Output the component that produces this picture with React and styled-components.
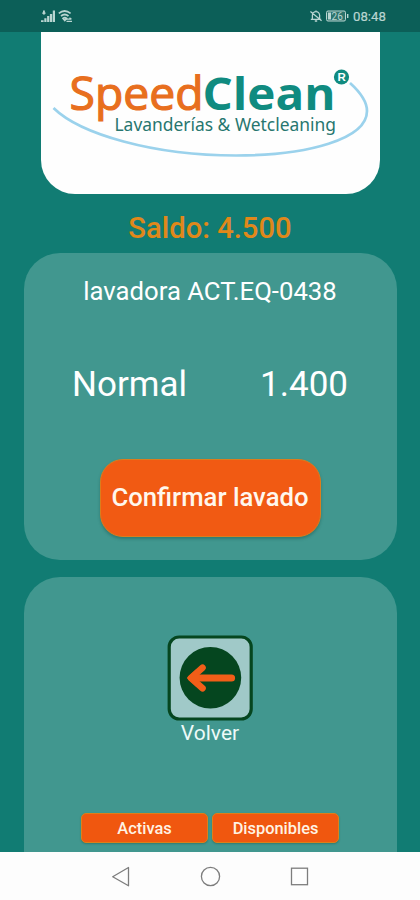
import React from 'react';
import styled, { createGlobalStyle } from 'styled-components';

const GlobalStyle = createGlobalStyle`
  *, *::before, *::after { box-sizing: border-box; }
  html, body { margin: 0; padding: 0; background: #117c73; }
  button { font: inherit; margin: 0; padding: 0; cursor: pointer; }
`;

const Screen = styled.div`
  width: 420px;
  height: 900px;
  display: flex;
  flex-direction: column;
  overflow: hidden;
  background: #117c73;
  color: #fff;
  font-family: Roboto, sans-serif;
`;

const StatusBar = styled.header`
  flex: none;
  height: 32px;
  padding: 0 33px 0 41px;
  display: flex;
  align-items: center;
  justify-content: space-between;
  background: #0c5f58;
  color: #b9d5d1;
`;

const StatusGroup = styled.div`
  display: flex;
  align-items: center;
  gap: ${({ $gap }) => $gap}px;
`;

const Clock = styled.time`
  font-size: 13.2px;
  line-height: 16px;
  width: 34px;
  padding-top: 1px;
  white-space: nowrap;
  -webkit-text-stroke: 0.2px currentColor;
`;

const Content = styled.main`
  flex: 1;
  min-height: 0;
  display: flex;
  flex-direction: column;
  align-items: center;
`;

const LogoPanel = styled.div`
  flex: none;
  width: 339px;
  height: 162px;
  background: #fefefe;
  border-radius: 0 0 34px 34px;

  svg { display: block; }
`;

const Balance = styled.h1`
  flex: none;
  margin: 0;
  height: 59px;
  padding-top: 17px;
  font-size: 29.2px;
  line-height: 34px;
  font-weight: 500;
  color: #e0881a;
  white-space: nowrap;
`;

const Card = styled.section`
  flex: none;
  width: 373px;
  height: ${({ $height }) => $height}px;
  display: flex;
  flex-direction: column;
  align-items: center;
  background: #41978f;
  border-radius: ${({ $open }) => ($open ? '36px 36px 0 0' : '36px')};
  margin-bottom: ${({ $open }) => ($open ? 0 : 17)}px;
`;

const Machine = styled.h2`
  margin: 23px 0 0;
  font-size: 25.7px;
  line-height: 30px;
  font-weight: 400;
  white-space: nowrap;
`;

const PriceRow = styled.div`
  width: 276px;
  margin-top: 56px;
  display: flex;
  justify-content: space-between;
  font-size: 35px;
  line-height: 46px;
`;

const ConfirmButton = styled.button`
  width: 221px;
  height: 78px;
  margin-top: 51px;
  padding-bottom: 2px;
  border: 1.5px solid #dc7d1c;
  border-radius: 23px;
  background: #f15a13;
  color: #fff7ed;
  box-shadow: 0 2px 3px rgba(20, 70, 60, 0.35);

  && {
    font-size: 25.7px;
    font-weight: 500;
    white-space: nowrap;
  }
`;

const BackButton = styled.button`
  margin-top: 58px;
  display: flex;
  flex-direction: column;
  align-items: center;
  border: 0;
  background: none;
  color: #edfaf8;

  && {
    font-size: 21px;
    line-height: 24px;
  }
`;

const Tabs = styled.nav`
  margin-top: auto;
  margin-bottom: 9px;
  display: flex;
  gap: 4px;
`;

const Tab = styled.button`
  width: 127px;
  height: 30px;
  border: 1.5px solid #dd8019;
  border-radius: 5px;
  background: #f0570f;
  color: #fff3e4;
  box-shadow: 0 1px 2px rgba(20, 70, 60, 0.35);

  && {
    font-size: 16.4px;
    font-weight: 500;
  }
`;

const SystemNav = styled.footer`
  flex: none;
  height: 48px;
  background: #fdfdfd;
  display: flex;
  justify-content: center;
  align-items: center;
  gap: 67px;
`;

const Signal = () => (
  <svg width="14" height="14" viewBox="0 0 14 14" fill="currentColor">
    <path d="M0 11.3h2.6V13H0zM3.3 9.3h2.2V13H3.3zM6.1 7h2.2v6H6.1zM8.9 5h2.3v8H8.9zM11.8 1.5H14V13h-2.2z" />
    <path d="M2 1.6h1.9v3.8H2zM1.2 3.6h3.4v1.2H1.2z" />
  </svg>
);

const Wifi = () => (
  <svg width="15" height="14" viewBox="0 0 15 14" fill="none" stroke="currentColor" strokeWidth="1.7">
    <path d="M.8 4.4Q6.5-.4 12.6 4.4M3 7Q6.7 4 10.5 7M5 9.3Q6.8 7.8 8.6 9.3L6.8 11.4z" />
    <path d="M8 10.2h5M11.5 8.8l2 1.4M14 12.3H8.5" strokeWidth="1.2" />
  </svg>
);

const BellOff = () => (
  <svg width="12" height="14" viewBox="0 0 12 14" fill="none" stroke="currentColor" strokeWidth="1.3">
    <path d="M2.4 10V6.2a3.6 3.6 0 0 1 7.2 0V10M.8 10.3h10.4M4.8 12h2.4M6 1.4v1.2M.4 2.4l11.2 9.4" />
  </svg>
);

const Battery = () => (
  <svg width="23" height="12" viewBox="0 0 23 12">
    <rect x=".5" y="1" width="19" height="10" rx="1.5" fill="#2d736c" stroke="currentColor" strokeWidth="1" />
    <path d="M2 2.5h3v7H2z" fill="currentColor" />
    <path d="M21 4h1.4v4H21z" fill="currentColor" />
    <text x="5.6" y="9.6" fontSize="10" fontFamily="Roboto, sans-serif" fill="currentColor">26</text>
  </svg>
);

const Logo = () => (
  <svg width="339" height="162" viewBox="41 32 339 162" role="img" aria-label="SpeedClean">
    <path
      d="M53.5 108 C80 134 153 155.5 236 155.5 C308 155.5 367 139 367 111 C367 102 360 92 350 83"
      fill="none" stroke="#9bd2ec" strokeWidth="2.7"
    />
    <g fontFamily="'Open Sans', 'Noto Sans', sans-serif">
      <text x="69.5" y="109.5" fontSize="45" textLength="134" lengthAdjust="spacingAndGlyphs" fill="#e86f1e" stroke="#e86f1e" strokeWidth="1.2">Speed</text>
      <text x="202.5" y="109.5" fontSize="45" fontWeight="700" textLength="133" lengthAdjust="spacingAndGlyphs" fill="#108b80">Clean</text>
    </g>
    <text x="114.5" y="130.5" fontFamily="'Noto Sans', sans-serif" fontSize="17.6" textLength="221.5" lengthAdjust="spacingAndGlyphs" fill="#27766f">Lavanderías &amp; Wetcleaning</text>
    <circle cx="341.5" cy="77" r="7.6" fill="#108b80" />
    <text x="341.7" y="81.2" textAnchor="middle" fontFamily="'Liberation Sans', sans-serif" fontWeight="700" fontSize="11.5" fill="#fff">R</text>
  </svg>
);

const BackIcon = () => (
  <svg width="86" height="86" viewBox="0 0 86 86">
    <rect x="2.2" y="2" width="82" height="82" rx="10" fill="#a0c9c8" stroke="#05461f" strokeWidth="3.2" />
    <circle cx="43.4" cy="42.8" r="30.8" fill="#05461f" />
    <path d="M64.5 43H28" fill="none" stroke="#f25e18" strokeWidth="7.2" strokeLinecap="round" />
    <path d="M35.5 32.8 24 43 35.5 53.2" fill="none" stroke="#f25e18" strokeWidth="6.6" strokeLinecap="round" strokeLinejoin="round" />
    <path d="M19.8 43 29 34.5 33 43 29 51.5z" fill="#f25e18" />
  </svg>
);

const NavBack = () => (
  <svg width="22" height="22" viewBox="0 0 22 22" fill="none" stroke="#7d7d7d" strokeWidth="1.3" strokeLinejoin="round">
    <path d="M18.5 2.5v18.3L2.7 11.8z" />
  </svg>
);

const NavHome = () => (
  <svg width="22" height="22" viewBox="0 0 22 22" fill="none" stroke="#7d7d7d" strokeWidth="1.3">
    <circle cx="11.5" cy="11.5" r="9.1" />
  </svg>
);

const NavRecent = () => (
  <svg width="22" height="22" viewBox="0 0 22 22" fill="none" stroke="#7d7d7d" strokeWidth="1.3">
    <rect x="3.5" y="3.2" width="16" height="16.5" />
  </svg>
);

export default function App() {
  return (
    <>
      <GlobalStyle />
      <Screen>
        <StatusBar>
          <StatusGroup $gap={3}>
            <Signal />
            <Wifi />
          </StatusGroup>
          <StatusGroup $gap={4}>
            <BellOff />
            <Battery />
            <Clock>08:48</Clock>
          </StatusGroup>
        </StatusBar>
        <Content>
          <LogoPanel>
            <Logo />
          </LogoPanel>
          <Balance>Saldo: 4.500</Balance>
          <Card $height={307}>
            <Machine>lavadora ACT.EQ-0438</Machine>
            <PriceRow>
              <span>Normal</span>
              <span>1.400</span>
            </PriceRow>
            <ConfirmButton>Confirmar lavado</ConfirmButton>
          </Card>
          <Card $height={275} $open>
            <BackButton>
              <BackIcon />
              <span>Volver</span>
            </BackButton>
            <Tabs>
              <Tab>Activas</Tab>
              <Tab>Disponibles</Tab>
            </Tabs>
          </Card>
        </Content>
        <SystemNav>
          <NavBack />
          <NavHome />
          <NavRecent />
        </SystemNav>
      </Screen>
    </>
  );
}
